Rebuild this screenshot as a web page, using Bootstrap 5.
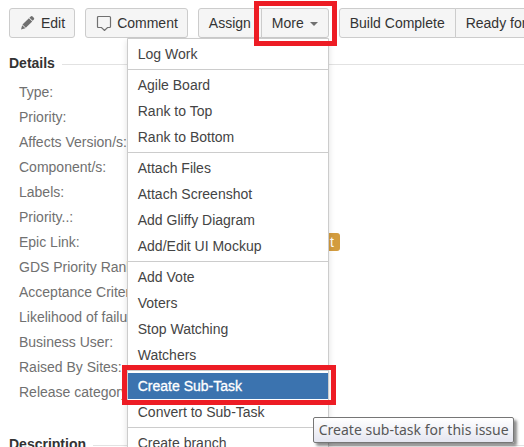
<!DOCTYPE html>
<html lang="en">
<head>
<meta charset="utf-8">
<meta name="viewport" content="width=device-width, initial-scale=1">
<title>Issue details</title>
<link href="https://cdn.jsdelivr.net/npm/bootstrap@5.3.0/dist/css/bootstrap.min.css" rel="stylesheet">
<style>
body { font: 14px/20px "Liberation Sans", Arial, sans-serif; color: #333; background: #fff; }
.page { height: 100vh; padding: 8px 0 0 9px; }
.tools { gap: 10px; }
.tools .tool {
  --bs-btn-font-size: 14px; --bs-btn-line-height: 20px;
  --bs-btn-padding-x: 10px; --bs-btn-padding-y: 4px;
  --bs-btn-color: #333; --bs-btn-bg: #f5f5f5; --bs-btn-border-color: #ccc;
  --bs-btn-hover-bg: #e9e9e9; --bs-btn-hover-border-color: #999;
  --bs-btn-border-radius: 3px;
  white-space: nowrap; flex: none;
}
.tools .tool svg { display: block; }
.tools .with-icon { --bs-btn-padding-x: 9px; display: flex; align-items: center; gap: 4px; }
.more-wrap { margin-left: -1px; }
.more-wrap .tool::after { margin-left: 6px; vertical-align: 2px; border-top: 4px solid #707070; border-left: 4px solid transparent; border-right: 4px solid transparent; }
.callout-box::before { content: ""; position: absolute; z-index: 1100; border: 5px solid #ed1c24; pointer-events: none; }
.more-wrap.callout-box::before { inset: -7px -8px -8px -7px; }
.more-menu.dropdown-menu {
  --bs-dropdown-font-size: 14px;
  top: 100%; right: 0; width: 202px; padding: 2px 0; margin: 0;
  border: 1px solid #ccc; border-radius: 0 0 3px 3px; box-shadow: 0 3px 6px rgba(0,0,0,.13);
}
.more-menu .dropdown-item { padding: 3px 10px; line-height: 20px; color: #444; }
.more-menu .dropdown-divider { margin: 2px 0; border-color: #ccc; opacity: 1; }
.more-menu .dropdown-item.active { background: #3b73af; color: #fff; -webkit-text-stroke: .3px #fff; }
.more-menu .callout-box::before { inset: -8px -8px -6px -6px; }
.hint {
  position: absolute; z-index: 1110; left: 185px; top: 44px; padding: 2px 4px 2px 5px;
  font: 14px/20px "Noto Sans", "Open Sans", sans-serif; color: #575757; white-space: nowrap;
  background: linear-gradient(#fff, #e4e5f0); border: 1px solid #767676; border-radius: 2px;
  box-shadow: 3px 3px 3px rgba(0,0,0,.45);
}
.section-head { gap: 7px; }
.section-head h2 { font-size: 14px; line-height: 20px; font-weight: 700; color: #333; }
.section-head::after { content: ""; flex: 1; height: 1px; margin-top: 2px; background: #e2e2e2; }
.details-head { margin-top: 15px; margin-bottom: 7px; }
.description-head { margin-top: 29px; }
.fields > div { display: flex; line-height: 25px; padding-left: 10px; }
.fields dt { width: 150px; flex: none; font-weight: 400; color: #707070; white-space: nowrap; }
.fields dd { margin: 0; }
.epic { display: block; width: 171px; margin-top: 3px; padding: 0 6px; text-align: right; line-height: 18px; color: #fff; text-decoration: none; background: #d39c3f; border-radius: 3px; }
</style>
</head>
<body>
<main class="page overflow-hidden">
  <div class="tools d-flex flex-nowrap" role="toolbar" aria-label="Issue actions">
    <button type="button" class="btn tool with-icon">
      <svg width="18" height="16" viewBox="0 0 18 16" aria-hidden="true"><g fill="#707070"><path d="M2 14.5l1.2-4.3 3.2 3.1z"/><path d="M3.5 9.5l6.4-6.3 3.3 3.3-6.4 6.3z"/><path d="M10.4 2.7l1.3-1.3q.9-.8 1.9.1l1.2 1.2q.9.9.1 1.8l-1.3 1.3z"/></g></svg>
      <span>Edit</span>
    </button>
    <button type="button" class="btn tool with-icon">
      <svg width="18" height="16" viewBox="0 0 18 16" aria-hidden="true"><path d="M3.500 1.500h11q1 0 1 1v9q0 1-1 1h-2l-3 3-3-3h-3q-1 0-1-1v-9q0-1 1-1z" fill="none" stroke="#707070" stroke-width="1.2"/></svg>
      <span>Comment</span>
    </button>
    <div class="btn-group flex-shrink-0">
      <button type="button" class="btn tool">Assign</button>
      <div class="btn-group more-wrap callout-box">
        <button type="button" class="btn tool dropdown-toggle" aria-expanded="true">More</button>
        <ul class="dropdown-menu more-menu show">
          <li><a class="dropdown-item" href="#">Log Work</a></li>
          <li><hr class="dropdown-divider"></li>
          <li><a class="dropdown-item" href="#">Agile Board</a></li>
          <li><a class="dropdown-item" href="#">Rank to Top</a></li>
          <li><a class="dropdown-item" href="#">Rank to Bottom</a></li>
          <li><hr class="dropdown-divider"></li>
          <li><a class="dropdown-item" href="#">Attach Files</a></li>
          <li><a class="dropdown-item" href="#">Attach Screenshot</a></li>
          <li><a class="dropdown-item" href="#">Add Gliffy Diagram</a></li>
          <li><a class="dropdown-item" href="#">Add/Edit UI Mockup</a></li>
          <li><hr class="dropdown-divider"></li>
          <li><a class="dropdown-item" href="#">Add Vote</a></li>
          <li><a class="dropdown-item" href="#">Voters</a></li>
          <li><a class="dropdown-item" href="#">Stop Watching</a></li>
          <li><a class="dropdown-item" href="#">Watchers</a></li>
          <li><hr class="dropdown-divider"></li>
          <li class="position-relative callout-box">
            <a class="dropdown-item active" href="#" aria-describedby="subtask-hint">Create Sub-Task</a>
            <div class="hint" id="subtask-hint" role="tooltip">Create sub-task for this issue</div>
          </li>
          <li><a class="dropdown-item" href="#">Convert to Sub-Task</a></li>
          <li><hr class="dropdown-divider"></li>
          <li><a class="dropdown-item" href="#">Create branch</a></li>
        </ul>
      </div>
    </div>
    <div class="btn-group flex-shrink-0">
      <button type="button" class="btn tool">Build Complete</button>
      <button type="button" class="btn tool">Ready for</button>
    </div>
  </div>

  <section>
    <div class="section-head details-head d-flex align-items-center"><h2 class="m-0">Details</h2></div>
    <dl class="fields m-0">
      <div><dt>Type:</dt></div>
      <div><dt>Priority:</dt></div>
      <div><dt>Affects Version/s:</dt></div>
      <div><dt>Component/s:</dt></div>
      <div><dt>Labels:</dt></div>
      <div><dt>Priority..:</dt></div>
      <div><dt>Epic Link:</dt><dd><a class="epic" href="#">t</a></dd></div>
      <div><dt>GDS Priority Rank:</dt></div>
      <div><dt>Acceptance Criteria:</dt></div>
      <div><dt>Likelihood of failure:</dt></div>
      <div><dt>Business User:</dt></div>
      <div><dt>Raised By Sites:</dt></div>
      <div><dt>Release category:</dt></div>
    </dl>
  </section>
  <section>
    <div class="section-head description-head d-flex align-items-center"><h2 class="m-0">Description</h2></div>
  </section>
</main>
<script src="https://cdn.jsdelivr.net/npm/bootstrap@5.3.0/dist/js/bootstrap.bundle.min.js"></script>
</body>
</html>
